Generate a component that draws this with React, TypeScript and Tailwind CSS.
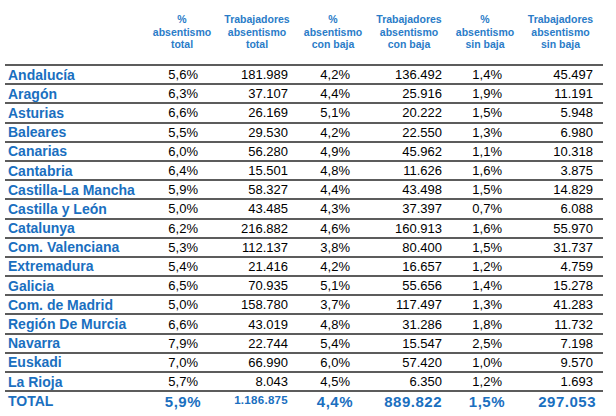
const rows: [string, string, string, string, string, string, string][] = [
  ["Andalucía", "5,6%", "181.989", "4,2%", "136.492", "1,4%", "45.497"],
  ["Aragón", "6,3%", "37.107", "4,4%", "25.916", "1,9%", "11.191"],
  ["Asturias", "6,6%", "26.169", "5,1%", "20.222", "1,5%", "5.948"],
  ["Baleares", "5,5%", "29.530", "4,2%", "22.550", "1,3%", "6.980"],
  ["Canarias", "6,0%", "56.280", "4,9%", "45.962", "1,1%", "10.318"],
  ["Cantabria", "6,4%", "15.501", "4,8%", "11.626", "1,6%", "3.875"],
  ["Castilla-La Mancha", "5,9%", "58.327", "4,4%", "43.498", "1,5%", "14.829"],
  ["Castilla y León", "5,0%", "43.485", "4,3%", "37.397", "0,7%", "6.088"],
  ["Catalunya", "6,2%", "216.882", "4,6%", "160.913", "1,6%", "55.970"],
  ["Com. Valenciana", "5,3%", "112.137", "3,8%", "80.400", "1,5%", "31.737"],
  ["Extremadura", "5,4%", "21.416", "4,2%", "16.657", "1,2%", "4.759"],
  ["Galicia", "6,5%", "70.935", "5,1%", "55.656", "1,4%", "15.278"],
  ["Com. de Madrid", "5,0%", "158.780", "3,7%", "117.497", "1,3%", "41.283"],
  ["Región De Murcia", "6,6%", "43.019", "4,8%", "31.286", "1,8%", "11.732"],
  ["Navarra", "7,9%", "22.744", "5,4%", "15.547", "2,5%", "7.198"],
  ["Euskadi", "7,0%", "66.990", "6,0%", "57.420", "1,0%", "9.570"],
  ["La Rioja", "5,7%", "8.043", "4,5%", "6.350", "1,2%", "1.693"],
];

const headers = [
  ["%", "absentismo", "total"],
  ["Trabajadores", "absentismo", "total"],
  ["%", "absentismo", "con baja"],
  ["Trabajadores", "absentismo", "con baja"],
  ["%", "absentismo", "sin baja"],
  ["Trabajadores", "absentismo", "sin baja"],
];

// right padding per numeric column
const pad = ["pr-[16px]", "pr-[12px]", "pr-[16px]", "pr-[10px]", "pr-[16px]", "pr-[10px]"];

const grid = "grid grid-cols-[145px_64px_86px_66px_86px_66px_85px]";

export default function App() {
  return (
    <div className="w-[616px] h-[416px] bg-white font-['Liberation_Sans',Arial,sans-serif] overflow-hidden">
      <div className="ml-[5px] w-[598px]">
        {/* Header */}
        <div className={`${grid} h-[64px] pt-[13px]`}>
          <div />
          {headers.map((h, i) => (
            <div key={i} className="flex flex-col items-center text-[10.5px] leading-[12.5px] font-bold text-[#2a7cc8]">
              {h.map((l, j) => (
                <span key={j}>{l}</span>
              ))}
            </div>
          ))}
        </div>

        {/* Rows */}
        {rows.map((r) => (
          <div key={r[0]} className={`${grid} h-[19.2px] border-t-2 border-[#5c5c5c] items-center`}>
            <div className="pl-[3px] text-[14px] font-bold text-[#1a6fc0] whitespace-nowrap leading-none">{r[0]}</div>
            {r.slice(1).map((v, i) => (
              <div key={i} className={`text-right text-[13px] text-black leading-none ${pad[i]}`}>
                {v}
              </div>
            ))}
          </div>
        ))}

        {/* Total */}
        <div className={`${grid} h-[20px] border-t-2 border-[#5c5c5c] items-center font-bold text-[#1a6fc0] leading-none`}>
          <div className="pl-[3px] text-[14px]">TOTAL</div>
          <div className="text-right text-[15px] tracking-[0.5px] pr-[13px]">5,9%</div>
          <div className="text-right text-[11.5px] tracking-[0.3px] pr-[12px]">1.186.875</div>
          <div className="text-right text-[15px] tracking-[0.5px] pr-[13px]">4,4%</div>
          <div className="text-right text-[15px] tracking-[0.5px] pr-[10px]">889.822</div>
          <div className="text-right text-[15px] tracking-[0.5px] pr-[13px]">1,5%</div>
          <div className="text-right text-[15px] tracking-[0.5px] pr-[7px]">297.053</div>
        </div>
      </div>
    </div>
  );
}
